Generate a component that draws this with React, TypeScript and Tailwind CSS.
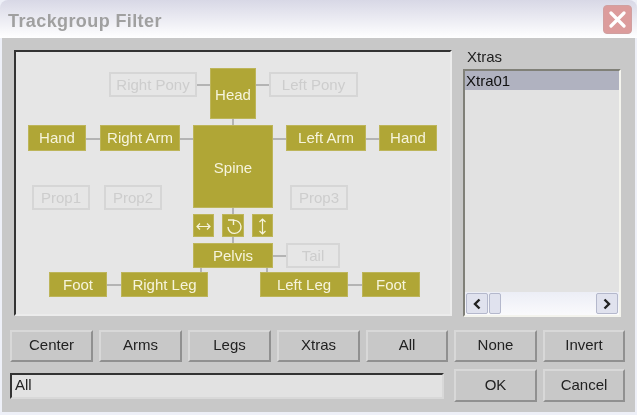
import React from 'react';

type NodeProps = { label?: string; x: number; y: number; w: number; h: number; ghost?: boolean; children?: React.ReactNode };

const Node: React.FC<NodeProps> = ({ label, x, y, w, h, ghost, children }) => (
  <div
    className={
      ghost
        ? 'absolute flex items-center justify-center border-2 border-[#d6d6d6] pt-[1px] text-[15px] text-[#cdcdcd]'
        : 'absolute flex items-center justify-center border border-[#bdb55a] bg-[#b0a636] pt-[1px] text-[15px] text-[#f6f4dc]'
    }
    style={{ left: x - 14, top: y - 50, width: w, height: h }}
  >
    {label}
    {children}
  </div>
);

// connector lines between the nodes: x, y, w, h in window coordinates
const links = [
  [197, 84, 13, 2], [256, 84, 13, 2], [232, 119, 2, 6], [86, 138, 14, 2], [180, 138, 13, 2],
  [273, 138, 13, 2], [366, 138, 13, 2], [232, 208, 2, 35], [273, 255, 13, 2], [107, 284, 14, 2],
  [200, 268, 2, 4], [266, 268, 2, 4], [348, 284, 14, 2],
];

const Btn: React.FC<{ label: string; tall?: boolean }> = ({ label, tall }) => (
  <button
    className={
      tall
        ? 'h-[33px] border-2 border-t-[#d8d8d8] border-l-[#d8d8d8] border-r-[#909090] border-b-[#909090] bg-[#c8c8c8] pb-[1px] text-[15px] text-[#222]'
        : 'h-[32px] border-2 border-t-[#d8d8d8] border-l-[#d8d8d8] border-r-[#909090] border-b-[#909090] bg-[#c8c8c8] pb-[1px] text-[15px] text-[#222]'
    }
  >
    {label}
  </button>
);

const Arrow: React.FC<{ dir: 'left' | 'right' }> = ({ dir }) => (
  <div className="flex h-[21px] w-[22px] items-center justify-center rounded-[2px] border border-[#b4b8cc] bg-[#e0e2ee]">
    <svg width="10" height="12" viewBox="0 0 10 12" fill="none" stroke="#222" strokeWidth="2.4">
      <path d={dir === 'left' ? 'M7.5 1.5 3 6l4.5 4.5' : 'M2.5 1.5 7 6l-4.5 4.5'} />
    </svg>
  </div>
);

export default function App() {
  return (
    <div className="flex h-[415px] w-[637px] flex-col bg-[#eef0f8] font-['Liberation_Sans',sans-serif] blur-[0.4px]">
      {/* title bar */}
      <div className="flex h-[38px] items-start justify-between rounded-t-[8px] bg-gradient-to-b from-[#d8d8e6] to-[#ffffff] pl-[8px] pr-[4px] pt-[5px]">
        <span className="text-[18px] font-bold leading-[33px] tracking-[0.4px] text-[#a0a0a0]">Trackgroup Filter</span>
        <div className="mr-[1px] flex h-[29px] w-[29px] items-center justify-center rounded-[4px] border border-[#d0a0a0] bg-[#dc9c9c]">
          <svg width="17" height="17" viewBox="0 0 17 17" stroke="#fff" strokeWidth="3.2" strokeLinecap="round">
            <path d="M2 2l13 13M15 2 2 15" />
          </svg>
        </div>
      </div>

      {/* dialog body */}
      <div className="mx-[2px] mb-[3px] flex flex-1 flex-col bg-[#c8c8c8] pl-[8px] pr-[8px]">
        <div className="flex items-start pt-[9px]">
          <div className="relative ml-[4px] mt-[3px] h-[266px] w-[438px] border-2 border-t-[#333] border-l-[#333] border-r-[#ececec] border-b-[#ececec] bg-[#e6e6e6]">
            <div className="absolute -left-[2px] -top-[2px]">
              {links.map(([x, y, w, h], i) => (
                <div
                  key={i}
                  className="absolute bg-[#b4b4b4]"
                  style={{ left: x - 14, top: y - 50, width: w, height: h }}
                />
              ))}
              <Node label="Right Pony" x={109} y={72} w={88} h={25} ghost />
              <Node x={210} y={68} w={46} h={51}>
                <span className="mt-[3px]">Head</span>
              </Node>
              <Node label="Left Pony" x={269} y={72} w={89} h={25} ghost />
              <Node label="Hand" x={28} y={125} w={58} h={26} />
              <Node label="Right Arm" x={100} y={125} w={80} h={26} />
              <Node x={193} y={125} w={80} h={83}>
                <span className="mt-[2px]">Spine</span>
              </Node>
              <Node label="Left Arm" x={286} y={125} w={80} h={26} />
              <Node label="Hand" x={379} y={125} w={58} h={26} />
              <Node label="Prop1" x={32} y={185} w={58} h={25} ghost />
              <Node label="Prop2" x={104} y={185} w={58} h={25} ghost />
              <Node label="Prop3" x={290} y={185} w={58} h={25} ghost />
              <Node x={193} y={214} w={21} h={23}>
                <svg width="15" height="9" viewBox="0 0 15 9" fill="none" stroke="#f6f4dc" strokeWidth="1.2">
                  <path d="M1 4.5h13M4 1.5l-3 3 3 3M11 1.5l3 3-3 3" />
                </svg>
              </Node>
              <Node x={222} y={214} w={22} h={23}>
                <svg width="17" height="18" viewBox="0 0 17 18" fill="none" stroke="#f6f4dc" strokeWidth="1.4">
                  <path d="M3 3H8.5V8M8.5 3.5A6.5 6.5 0 1 1 3 10" />
                </svg>
              </Node>
              <Node x={252} y={214} w={21} h={23}>
                <svg width="9" height="17" viewBox="0 0 9 17" fill="none" stroke="#f6f4dc" strokeWidth="1.2">
                  <path d="M4.5 1v15M1.5 4l3-3 3 3M1.5 13l3 3 3-3" />
                </svg>
              </Node>
              <Node label="Pelvis" x={193} y={243} w={80} h={25} />
              <Node label="Tail" x={286} y={243} w={54} h={25} ghost />
              <Node label="Foot" x={49} y={272} w={58} h={25} />
              <Node label="Right Leg" x={121} y={272} w={87} h={25} />
              <Node label="Left Leg" x={260} y={272} w={88} h={25} />
              <Node label="Foot" x={362} y={272} w={58} h={25} />
            </div>
          </div>

          {/* xtras list */}
          <div className="ml-[11px] flex w-[158px] flex-col">
            <span className="ml-[4px] text-[15px] leading-[19px] text-[#222]">Xtras</span>
            <div className="mt-[3px] flex h-[248px] flex-col justify-between border-2 border-t-[#808078] border-l-[#808078] border-r-[#f4f4ee] border-b-[#f4f4ee] bg-[#e2e2e2]">
              <div className="h-[19px] bg-[#b0b2c0] pl-[1px] text-[15px] leading-[19px] text-[#111]">Xtra01</div>
              <div className="flex h-[23px] items-start bg-gradient-to-b from-[#eceef6] to-[#fafafc] px-[1px] pt-[1px]">
                <Arrow dir="left" />
                <div className="ml-[1px] h-[21px] w-[12px] rounded-[2px] border border-[#b4b8cc] bg-[#e0e2ee]" />
                <div className="flex-1" />
                <Arrow dir="right" />
              </div>
            </div>
          </div>
        </div>

        {/* button rows */}
        <div className="mt-[13px] grid grid-cols-[83px_83px_83px_83px_82px_83px_82px] gap-x-[6px]">
          {['Center', 'Arms', 'Legs', 'Xtras', 'All', 'None', 'Invert'].map((b) => (
            <Btn key={b} label={b} />
          ))}
        </div>
        <div className="mt-[7px] flex items-center">
          <div className="flex h-[26px] w-[434px] items-center border-2 border-t-[#333] border-l-[#333] border-r-[#d8d8d8] border-b-[#d8d8d8] bg-[#e2e2e2] pl-[3px] text-[15px] text-[#222]">
            All
          </div>
          <div className="ml-[10px] grid grid-cols-[83px_82px] gap-x-[6px]">
            <Btn label="OK" tall />
            <Btn label="Cancel" tall />
          </div>
        </div>
      </div>
    </div>
  );
}
